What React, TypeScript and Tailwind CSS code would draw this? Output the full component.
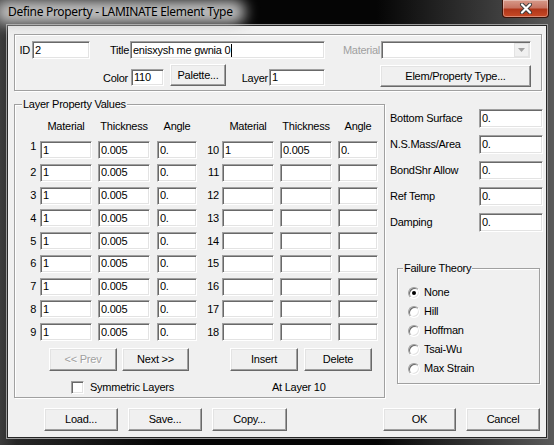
import React from 'react';

const field =
  'flex items-center bg-white pl-[2px] border border-t-[#a0a0a0] border-l-[#a0a0a0] border-r-white border-b-white shadow-[inset_1px_1px_0_#696969,inset_-1px_-1px_0_#e3e3e3]';
const btn =
  'flex items-center justify-center bg-[#f0f0f0] border border-t-white border-l-white border-r-[#696969] border-b-[#696969] shadow-[inset_-1px_-1px_0_#a0a0a0,inset_1px_1px_0_#e3e3e3]';
const etched = 'relative border border-[#a0a0a0] shadow-[inset_1px_1px_0_#fff,1px_1px_0_#fff]';

const leftRows = [1, 2, 3, 4, 5, 6, 7, 8, 9];
const rightRows = [10, 11, 12, 13, 14, 15, 16, 17, 18];

const props = ['Bottom Surface', 'N.S.Mass/Area', 'BondShr Allow', 'Ref Temp', 'Damping'];
const theories = ['None', 'Hill', 'Hoffman', 'Tsai-Wu', 'Max Strain'];

const LayerRow = ({ left, right }: { left: number; right: number }) => {
  const filled = right === 10;
  return (
    <div className="flex h-[18px] items-center">
      <span className={`w-[25px] pr-[4px] text-right ${left === 1 ? 'self-start leading-[11px]' : ''}`}>{left}</span>
      <div className={`${field} h-[18px] w-[52px]`}>1</div>
      <div className={`${field} ml-[6px] h-[18px] w-[52px]`}>0.005</div>
      <div className={`${field} ml-[7px] h-[18px] w-[40px]`}>0.</div>
      <span className="w-[25px] pr-[3px] text-right">{right}</span>
      <div className={`${field} h-[18px] w-[52px]`}>{filled ? '1' : ''}</div>
      <div className={`${field} ml-[6px] h-[18px] w-[52px]`}>{filled ? '0.005' : ''}</div>
      <div className={`${field} ml-[6px] h-[18px] w-[40px]`}>{filled ? '0.' : ''}</div>
    </div>
  );
};

export default function App() {
  return (
    <div className="flex h-[445px] w-[554px] flex-col bg-[linear-gradient(90deg,#3c3c3c_0%,#262626_3%,#050505_30%,#050505_68%,#3e3e3e_90%,#5a5a5a_100%)] font-['Liberation_Sans',Arial,sans-serif] text-[11px] leading-[13px] tracking-[-0.25px] text-black">
      {/* Title bar */}
      <div className="flex h-[25px] items-start justify-between">
        <div className="relative ml-[8px] mt-[4px]">
          <span className="absolute inset-x-[-12px] inset-y-[-4px] rounded-[10px] bg-[#c2c2c2] blur-[7px]" />
          <span className="relative font-['Noto_Sans',sans-serif] text-[12px] leading-[16px] tracking-[-0.3px] text-black">
            Define Property - LAMINATE Element Type
          </span>
        </div>
        <div className="mr-[5px] flex h-[18px] w-[47px] items-center justify-center rounded-b-[4px] border border-t-0 border-[#3a1208] bg-[linear-gradient(180deg,#d79a8a_0%,#c77462_45%,#b0361a_55%,#c84a26_100%)] shadow-[inset_0_0_0_1px_rgba(255,255,255,0.35)]">
          <svg width="14" height="11" viewBox="0 0 14 11">
            <path d="M3 1.5 L11 9.5 M11 1.5 L3 9.5" stroke="#3b3b3b" strokeWidth="4" strokeLinecap="round" />
            <path d="M3 1.5 L11 9.5 M11 1.5 L3 9.5" stroke="#fff" strokeWidth="2.2" strokeLinecap="round" />
          </svg>
        </div>
      </div>

      {/* Client area */}
      <div className="ml-[7px] h-[413px] w-[540px] border border-[#262626] bg-[#f0f0f0] shadow-[0_0_0_1px_#9c9c9c]">
        {/* Top box */}
        <div className={`${etched} ml-[6px] mt-[8px] h-[57px] w-[528px]`}>
          <div className="mt-[6px] flex h-[18px] items-center">
            <span className="w-[17px] pr-[2px] text-right">ID</span>
            <div className={`${field} h-[18px] w-[58px]`}>2</div>
            <span className="w-[40px] pr-[1px] text-right">Title</span>
            <div className={`${field} h-[18px] w-[195px]`}>
              enisxysh me gwnia 0<span className="ml-[1px] h-[13px] w-[1px] bg-black" />
            </div>
            <span className="w-[56px] pr-[1px] text-right text-[#a0a0a0]">Material</span>
            <div className={`${field} h-[18px] w-[150px] justify-end bg-[#f0f0f0] pr-[1px]`}>
              <div className="flex h-[14px] w-[15px] items-center justify-center border border-[#e3e3e3] bg-[#f0f0f0]">
                <svg width="7" height="4" viewBox="0 0 7 4">
                  <path d="M0 0 H7 L3.5 4 Z" fill="#a0a0a0" />
                </svg>
              </div>
            </div>
          </div>
          <div className="mt-[5px] flex h-[23px] items-end">
            <span className="mb-[2px] w-[116px] pr-[3px] text-right">Color</span>
            <div className={`${field} mb-[1px] h-[17px] w-[33px]`}>110</div>
            <div className={`${btn} mb-[1px] ml-[6px] h-[22px] w-[56px]`}>Palette...</div>
            <span className="mb-[2px] w-[43px] pr-[1px] text-right">Layer</span>
            <div className={`${field} mb-[1px] h-[17px] w-[56px]`}>1</div>
            <div className={`${btn} ml-[55px] h-[22px] w-[151px]`}>Elem/Property Type...</div>
          </div>
        </div>

        {/* Main row */}
        <div className="mt-[13px] flex items-start">
          <div className={`${etched} ml-[6px] h-[294px] w-[371px]`}>
            <span className="absolute left-[7px] top-[-7px] bg-[#f0f0f0] px-[1px]">Layer Property Values</span>
            <div className="mt-[15px] flex">
              <span className="w-[25px]" />
              <span className="w-[52px] text-center">Material</span>
              <span className="ml-[6px] w-[52px] text-center">Thickness</span>
              <span className="ml-[7px] w-[40px] text-center">Angle</span>
              <span className="w-[25px]" />
              <span className="w-[52px] text-center">Material</span>
              <span className="ml-[6px] w-[52px] text-center">Thickness</span>
              <span className="ml-[6px] w-[40px] text-center">Angle</span>
            </div>
            <div className="mt-[8px] flex flex-col gap-[4.75px]">
              {leftRows.map((l, i) => (
                <LayerRow key={l} left={l} right={rightRows[i]} />
              ))}
            </div>
            <div className="mt-[7px] flex h-[23px]">
              <div className={`${btn} ml-[34px] w-[68px] text-[#a0a0a0] [text-shadow:1px_1px_0_#fff]`}>&lt;&lt; Prev</div>
              <div className={`${btn} ml-[5px] w-[67px]`}>Next &gt;&gt;</div>
              <div className={`${btn} ml-[41px] w-[68px]`}>Insert</div>
              <div className={`${btn} ml-[6px] w-[68px]`}>Delete</div>
            </div>
            <div className="mt-[10px] flex h-[13px] items-center">
              <div className={`${field} ml-[56px] h-[13px] w-[13px] pl-0`} />
              <span className="ml-[6px] w-[182px]">Symmetric Layers</span>
              <span>At Layer 10</span>
            </div>
          </div>

          <div className="ml-[5px] mt-[5px] flex flex-col">
            <div className="flex flex-col gap-[7px]">
              {props.map(p => (
                <div key={p} className="flex h-[19px] items-center">
                  <span className="w-[89px]">{p}</span>
                  <div className={`${field} h-[19px] w-[64px]`}>0.</div>
                </div>
              ))}
            </div>
            <div className={`${etched} ml-[7px] mt-[36px] h-[116px] w-[143px] pl-[10px] pt-[14px]`}>
              <span className="absolute left-[5px] top-[-7px] bg-[#f0f0f0] px-[1px]">Failure Theory</span>
              {theories.map((t, i) => (
                <div key={t} className="flex h-[19px] items-center">
                  <div className="flex h-[12px] w-[12px] items-center justify-center rounded-full border border-t-[#a0a0a0] border-l-[#a0a0a0] border-r-white border-b-white bg-white shadow-[inset_1px_1px_0_#696969,inset_-1px_-1px_0_#e3e3e3]">
                    {i === 0 && <div className="h-[4px] w-[4px] rounded-full bg-black" />}
                  </div>
                  <span className="ml-[4px]">{t}</span>
                </div>
              ))}
            </div>
          </div>
        </div>

        {/* Bottom buttons */}
        <div className="mt-[10px] flex h-[23px]">
          <div className={`${btn} ml-[36px] w-[74px]`}>Load...</div>
          <div className={`${btn} ml-[10px] w-[74px]`}>Save...</div>
          <div className={`${btn} ml-[10px] w-[75px]`}>Copy...</div>
          <div className={`${btn} ml-[96px] w-[73px]`}>OK</div>
          <div className={`${btn} ml-[10px] w-[74px]`}>Cancel</div>
        </div>
      </div>
    </div>
  );
}
